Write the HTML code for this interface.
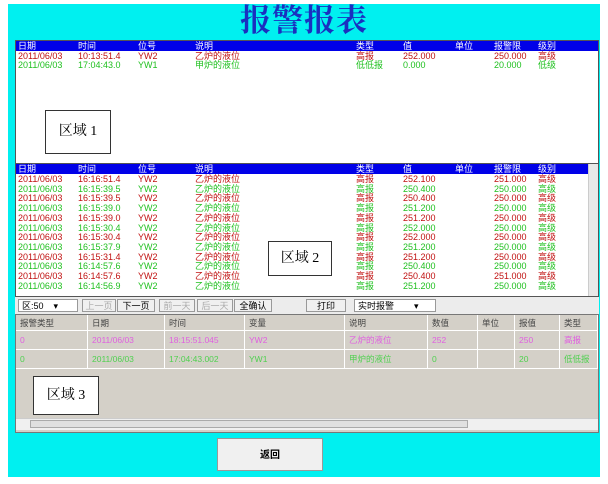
<!DOCTYPE html><html><head><meta charset="utf-8"><style>
*{margin:0;padding:0;box-sizing:border-box}
body{width:608px;height:484px;background:#fff;position:relative;overflow:hidden;font-family:"Liberation Sans","Noto Sans CJK SC",sans-serif;font-size:9px}
.a{position:absolute}
#p{left:8px;top:4px;width:592px;height:473px;background:#00f0f0}
.t{left:0;width:608px;top:3px;text-align:center;font-family:"Liberation Serif","Noto Serif CJK SC",serif;font-size:31px;font-weight:bold;color:#1a30c0;line-height:36px;letter-spacing:1px}
.box{background:#fff;border:1px solid #555}
.hb{background:#0000e8;color:#fff;height:10px;line-height:10px}
.r{height:9.7px;line-height:9.7px;white-space:nowrap}
.r span,.hb span{position:absolute}
.red{color:#c01010}.grn{color:#20c020}
.lbl{background:#fff;border:1px solid #333;font-family:"Liberation Serif","Noto Serif CJK SC",serif;font-size:14px;text-align:center}
.g3{background:#d4d0c8;border:1px solid #777}
.c3{position:absolute;border-right:1px solid #fff;border-bottom:1px solid #fff;padding-left:4px;font-size:8.5px;white-space:nowrap;overflow:hidden}
.btn{border:1px solid #999;background:#f0f0f0;text-align:center;line-height:12px;font-size:9px}
</style></head><body>
<div class="a" id="p"></div>
<div class="a t">报警报表</div>
<div class="a box" style="left:15px;top:40px;width:584px;height:124px"></div>
<div class="a hb" style="left:16px;top:41px;width:582px">
<span style="left:2px">日期</span><span style="left:62px">时间</span><span style="left:122px">位号</span><span style="left:179px">说明</span><span style="left:340px">类型</span><span style="left:387px">值</span><span style="left:439px">单位</span><span style="left:478px">报警限</span><span style="left:522px">级别</span></div>
<div class="a r red" style="left:16px;top:52px;width:582px"><span style="left:2px">2011/06/03</span><span style="left:62px">10:13:51.4</span><span style="left:122px">YW2</span><span style="left:179px">乙炉的液位</span><span style="left:340px">高报</span><span style="left:387px">252.000</span><span style="left:478px">250.000</span><span style="left:522px">高级</span></div>
<div class="a r grn" style="left:16px;top:61px;width:582px"><span style="left:2px">2011/06/03</span><span style="left:62px">17:04:43.0</span><span style="left:122px">YW1</span><span style="left:179px">甲炉的液位</span><span style="left:340px">低低报</span><span style="left:387px">0.000</span><span style="left:478px">20.000</span><span style="left:522px">低级</span></div>
<div class="a lbl" style="left:45px;top:110px;width:66px;height:44px;line-height:42px">区域 1</div>

<div class="a box" style="left:15px;top:163px;width:584px;height:134px"></div>
<div class="a hb" style="left:16px;top:164px;width:572px">
<span style="left:2px">日期</span><span style="left:62px">时间</span><span style="left:122px">位号</span><span style="left:179px">说明</span><span style="left:340px">类型</span><span style="left:387px">值</span><span style="left:439px">单位</span><span style="left:478px">报警限</span><span style="left:522px">级别</span></div>
<div class="a" style="left:588px;top:164px;width:10px;height:132px;background:#e8e8e8;border-left:1px solid #ccc"></div>
<div class="a" id="rows" style="left:16px;top:175px;width:572px"></div>
<div class="a lbl" style="left:268px;top:241px;width:64px;height:35px;line-height:33px">区域 2</div>

<div class="a" style="left:15px;top:297px;width:584px;height:17px;background:#ececec"></div>
<div class="a btn" style="left:18px;top:299px;width:60px;height:13px;text-align:left;padding-left:3px;background:#fff">区:50 &nbsp;&nbsp;&nbsp;▾</div>
<div class="a btn" style="left:82px;top:299px;width:34px;height:13px;color:#aaa">上一页</div>
<div class="a btn" style="left:117px;top:299px;width:38px;height:13px">下一页</div>
<div class="a btn" style="left:159px;top:299px;width:36px;height:13px;color:#aaa">前一天</div>
<div class="a btn" style="left:197px;top:299px;width:36px;height:13px;color:#aaa">后一天</div>
<div class="a btn" style="left:234px;top:299px;width:38px;height:13px">全确认</div>
<div class="a btn" style="left:306px;top:299px;width:40px;height:13px">打印</div>
<div class="a btn" style="left:354px;top:299px;width:82px;height:13px;text-align:left;padding-left:3px;background:#fff">实时报警 &nbsp;&nbsp;&nbsp;&nbsp;&nbsp;&nbsp;&nbsp;▾</div>

<div class="a g3" style="left:15px;top:314px;width:584px;height:119px"></div>
<div id="g3"></div>
<div class="a lbl" style="left:33px;top:376px;width:66px;height:39px;line-height:37px">区域 3</div>
<div class="a" style="left:16px;top:418px;width:582px;height:12px;background:#f0f0f0;border-top:1px solid #ccc"></div>
<div class="a" style="left:30px;top:420px;width:438px;height:8px;background:#e0e0e0;border:1px solid #aaa"></div>
<div class="a btn" style="left:217px;top:438px;width:106px;height:33px;line-height:33px;font-weight:bold;font-size:10px">返回</div>
<script>
var d=[["2011/06/03","16:16:51.4","YW2","252.100","251.000",0],["2011/06/03","16:15:39.5","YW2","250.400","250.000",1],["2011/06/03","16:15:39.5","YW2","250.400","250.000",0],["2011/06/03","16:15:39.0","YW2","251.200","250.000",1],["2011/06/03","16:15:39.0","YW2","251.200","250.000",0],["2011/06/03","16:15:30.4","YW2","252.000","250.000",1],["2011/06/03","16:15:30.4","YW2","252.000","250.000",0],["2011/06/03","16:15:37.9","YW2","251.200","250.000",1],["2011/06/03","16:15:31.4","YW2","251.200","250.000",0],["2011/06/03","16:14:57.6","YW2","250.400","250.000",1],["2011/06/03","16:14:57.6","YW2","250.400","251.000",0],["2011/06/03","16:14:56.9","YW2","251.200","250.000",1]];
var h="";d.forEach(function(r,i){h+='<div class="r '+(r[5]?'grn':'red')+'" style="position:absolute;top:'+(i*9.7)+'px;width:572px"><span style="left:2px">'+r[0]+'</span><span style="left:62px">'+r[1]+'</span><span style="left:122px">'+r[2]+'</span><span style="left:179px">乙炉的液位</span><span style="left:340px">高报</span><span style="left:387px">'+r[3]+'</span><span style="left:478px">'+r[4]+'</span><span style="left:522px">高级</span></div>'});
document.getElementById("rows").innerHTML=h;
var xs=[16,88,165,245,345,428,478,515,560,598];
var rr=[["报警类型","日期","时间","变量","说明","数值","单位","报值","类型","#444"],["0","2011/06/03","18:15:51.045","YW2","乙炉的液位","252","","250","高报","#e060e0"],["0","2011/06/03","17:04:43.002","YW1","甲炉的液位","0","","20","低低报","#50d050"]];
var tops=[315,331,350],hs=[16,19,19];
var g="";rr.forEach(function(r,j){for(var k=0;k<9;k++){g+='<div class="c3" style="left:'+xs[k]+'px;top:'+tops[j]+'px;height:'+hs[j]+'px;line-height:'+hs[j]+'px;width:'+(xs[k+1]-xs[k])+'px;color:'+r[9]+'">'+r[k]+'</div>'}});
document.getElementById("g3").innerHTML=g;
</script>
</body></html>
